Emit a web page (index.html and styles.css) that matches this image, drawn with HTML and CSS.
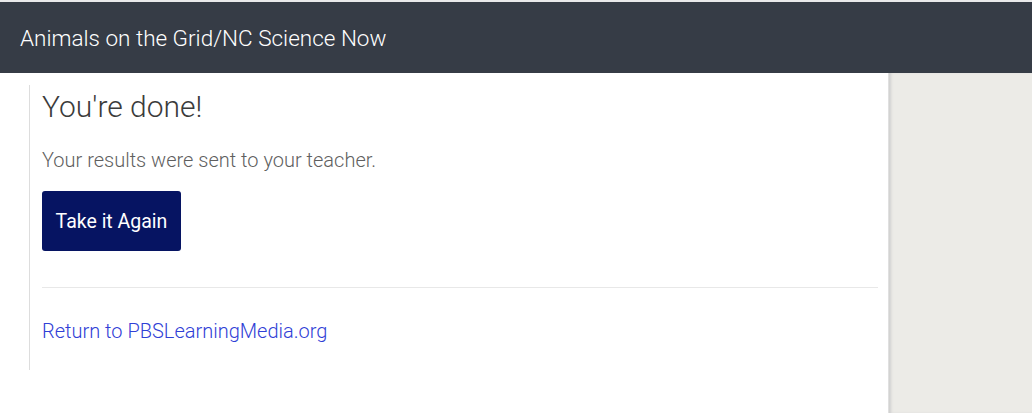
FILE: index.html
```html
<!DOCTYPE html>
<html lang="en">
	<head>
		<meta charset="utf-8">
		<meta name="viewport" content="width=device-width, initial-scale=1.0">
		<title>Animals on the Grid/NC Science Now</title>
		<link rel="stylesheet" href="styles.css">
	</head>

	<body>
		<header id="topbar">
			<h1>Animals on the Grid/NC Science Now</h1>
		</header>
		<div id="page">
			<main>
				<section class="done">
					<h2>You're done!</h2>
					<p>Your results were sent to your teacher.</p>
					<button class="again">Take it Again</button>
					<hr>
					<a href="#" class="back">Return to PBSLearningMedia.org</a>
				</section>
			</main>
			<aside></aside>
		</div>
	</body>
</html>
```

FILE: styles.css
```css
html, body{
	margin: 0;
	height: 100%;
}
body{
	font-family: Roboto, "Liberation Sans", sans-serif;
	background-color: white;
	display: flex;
	flex-direction: column;
}
#topbar{
	background-color: #363c46;
	border-top: 2px solid #e9e9ea;
	height: 71px;
	padding: 0 20px;
	display: flex;
	align-items: center;
}
#topbar h1{
	margin: 0;
	color: white;
	font-size: 22.5px;
	font-weight: 300;
}
#page{
	flex: 1;
	display: flex;
}
main{
	width: 888px;
	padding-top: 12px;
}
aside{
	flex: 1;
	background-color: #ecebe7;
	box-shadow: inset 3px 0 3px -1px #cfcfcf;
	border-left: 1px solid #e0e0e0;
}
.done{
	margin-left: 29px;
	padding-left: 12px;
	padding-right: 10px;
	border-left: 1px solid #dddddd;
	height: 285px;
}
.done h2{
	margin: 0;
	padding-top: 4px;
	font-size: 30px;
	font-weight: 300;
	color: #3b3b3b;
	line-height: 36px;
}
.done p{
	margin: 23px 0 0;
	font-size: 20px;
	font-weight: 300;
	color: #5f5f5f;
	line-height: 24px;
}
.again{
	margin-top: 19px;
	background-color: #061462;
	color: white;
	border: none;
	border-radius: 3px;
	height: 60px;
	width: 139px;
	font-family: inherit;
	font-size: 19.5px;
	font-weight: 400;
	cursor: pointer;
}
.done hr{
	margin: 36px 0 0;
	border: none;
	border-top: 1px solid #e8e8e8;
}
.back{
	display: inline-block;
	margin-top: 31px;
	color: #3040d6;
	text-decoration: none;
	font-size: 20px;
	font-weight: 300;
	line-height: 24px;
}
```
